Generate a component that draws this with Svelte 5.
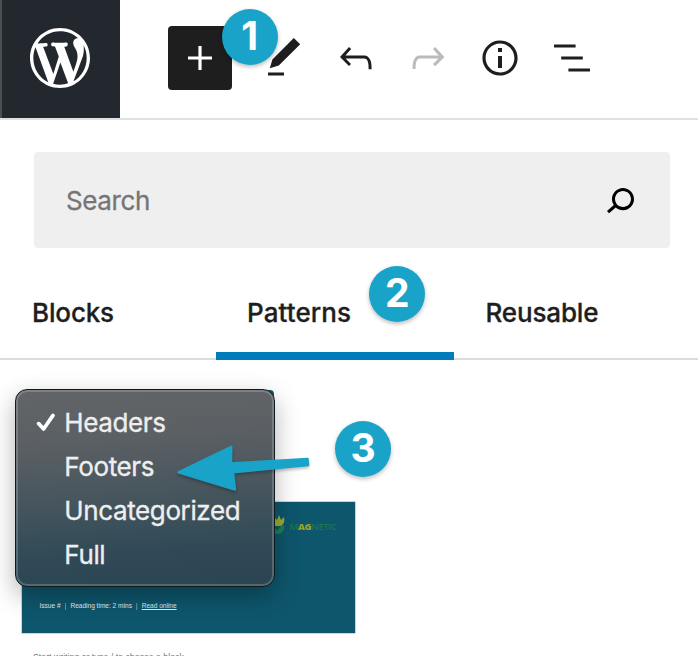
<script>
  const tools = [
    { name: 'Edit', d: 'M20.1 5.1L16.9 2 6.2 12.7l-1.3 4.4 4.5-1.3L20.1 5.1zM4 20.8h8v-1.5H4v1.5z' },
    { name: 'Undo', d: 'M18.3 11.7c-.6-.6-1.4-.9-2.3-.9H6.7l2.9-3.3-1.1-1-4.5 5L8.5 16l1-1-2.7-2.7H16c.5 0 .9.2 1.3.5 1 1 1 3.4 1 4.5v.3h1.5v-.2c0-1.5 0-4.3-1.5-5.7z' },
    { name: 'Redo', off: true, d: 'M15.6 6.5l-1.1 1 2.9 3.3H8c-.9 0-1.7.3-2.3.9-1.4 1.5-1.4 4.2-1.4 5.6v.2h1.5v-.3c0-1.1 0-3.5 1-4.5.3-.3.7-.5 1.3-.5h9.2L14.5 15l1.1 1.1 4.6-4.6-4.6-5z' },
    { name: 'Details', d: 'M12 3.2c-4.8 0-8.8 3.9-8.8 8.8 0 4.8 3.9 8.8 8.8 8.8 4.8 0 8.8-3.9 8.8-8.8 0-4.8-4-8.8-8.8-8.8zm0 16c-4 0-7.2-3.3-7.2-7.2C4.8 8 8 4.8 12 4.8s7.2 3.3 7.2 7.2c0 4-3.2 7.2-7.2 7.2zM11 17h2v-6h-2v6zm0-8h2V7h-2v2z' },
    { name: 'List view', d: 'M13.8 5.2H3v1.5h10.8V5.2zm-3.6 12v1.5H21v-1.5H10.2zm7.2-6H6.6v1.5h10.8v-1.5z' }
  ];
  const options = ['Headers', 'Footers', 'Uncategorized', 'Full'];
  let selected = $state('Headers');
</script>

<div class="page">
  <header>
    <div class="logo">
      <svg viewBox="-2 -2 24 24" width="72" height="72"><path fill="#fff" d="M20 10c0-5.51-4.49-10-10-10C4.48 0 0 4.49 0 10c0 5.52 4.48 10 10 10 5.51 0 10-4.48 10-10zM7.78 15.37L4.37 6.22c.55-.02 1.17-.08 1.17-.08.5-.06.44-1.13-.06-1.11 0 0-1.45.11-2.37.11-.18 0-.37 0-.58-.01C4.12 2.69 6.87 1.11 10 1.11c2.33 0 4.45.87 6.05 2.34-.68-.11-1.65.39-1.65 1.58 0 .74.45 1.36.9 2.1.35.61.55 1.36.55 2.46 0 1.49-1.4 5-1.4 5l-3.03-8.37c.54-.02.82-.17.82-.17.5-.05.44-1.25-.06-1.22 0 0-1.44.12-2.38.12-.87 0-2.33-.12-2.33-.12-.5-.03-.56 1.2-.06 1.22l.92.08 1.26 3.41zM17.41 10c.24-.64.74-1.87.43-4.25.7 1.29 1.05 2.71 1.05 4.25 0 3.29-1.73 6.24-4.4 7.78.97-2.59 1.94-5.2 2.92-7.78zM6.1 18.09C3.12 16.65 1.11 13.53 1.11 10c0-1.3.23-2.48.72-3.59C3.25 10.3 4.67 14.2 6.1 18.09zm4.03-6.63l2.58 6.98c-.86.29-1.76.45-2.71.45-.79 0-1.57-.11-2.29-.33.81-2.38 1.62-4.74 2.42-7.1z" /></svg>
    </div>
    <button class="add" aria-label="Add block">
      <svg viewBox="0 0 24 24" width="48" height="48"><path fill="#fff" d="M18 11.2h-5.2V6h-1.6v5.2H6v1.6h5.2V18h1.6v-5.2H18z" /></svg>
    </button>
    {#each tools as tool}
      <button class="tool" class:off={tool.off} aria-label={tool.name}>
        <svg viewBox="0 0 24 24" width="48" height="48"><path fill="currentColor" d={tool.d} /></svg>
      </button>
    {/each}
  </header>

  <div class="search">
    <span>Search</span>
    <svg viewBox="0 0 24 24" width="48" height="48"><path fill="#000" d="M13.5 6C10.5 6 8 8.5 8 11.5c0 1.1.3 2.1.9 3l-3.4 3 1 1.1 3.4-2.9c1 .9 2.2 1.4 3.6 1.4 3 0 5.5-2.5 5.5-5.5C19 8.5 16.5 6 13.5 6zm0 9.5c-2.2 0-4-1.8-4-4s1.8-4 4-4 4 1.8 4 4-1.8 4-4 4z" /></svg>
  </div>

  <nav>
    <div class="tab blocks"><span>Blocks</span></div>
    <div class="tab patterns"><span>Patterns</span></div>
    <div class="tab reusable"><span>Reusable</span></div>
  </nav>

  <main>
    <div class="preview">
      <div class="brand">
        <svg viewBox="0 0 22 24" width="22" height="24">
          <path fill="#9cad2f" d="M6 12C4 9 4 6 5 3l3 3 2-5 2 5 3-3c1 4 0 7-3 9z" />
          <path fill="#1d8050" d="M1 13c4-1 6 1 7 4 2-4 5-6 7-6 1 5-2 9-6 9-5 0-7-3-8-7z" />
        </svg>
        <span class="name">M<b>AG</b>NETIC</span>
      </div>
      <div class="meta">
        <span>Issue #</span><i>|</i><span class="time">Reading time: 2 mins</span><i>|</i><u>Read online</u>
      </div>
    </div>
    <p class="hint">Start writing or type / to choose a block</p>
  </main>

  <div class="corner"></div>
  <div class="menu">
    {#each options as option}
      <button class="option" onclick={() => (selected = option)}>
        <span class="tick">
          {#if option === selected}
            <svg viewBox="0 0 20 20" width="20" height="20"><path d="M2.6 11.6L7.6 17L17 3.4" fill="none" stroke="#fff" stroke-width="3.7" stroke-linecap="round" stroke-linejoin="round" /></svg>
          {/if}
        </span>
        <span class="label">{option}</span>
      </button>
    {/each}
  </div>

  <svg class="arrow" viewBox="170 440 145 60" width="145" height="60">
    <path d="M178.5 472.3L231.3 446.9L231 463.4L307.6 459L308.1 465L233 472.3L234.9 489.5Z" fill="#1aa3c8" stroke="#1aa3c8" stroke-width="2.4" stroke-linejoin="round" />
  </svg>
  <div class="badge one">1</div>
  <div class="badge two">2</div>
  <div class="badge three">3</div>
</div>

<style>
  :global(body) { margin: 0; background: #fff; overflow: hidden; }
  .page { position: relative; width: 698px; height: 656px; overflow: hidden; background: #fff; color: #1e1e1e; font-family: Inter, "Liberation Sans", sans-serif; font-size: 26px; }
  button { border: 0; margin: 0; padding: 0; background: none; font: inherit; color: inherit; }
  svg { display: block; flex: none; }
  header { display: flex; align-items: center; height: 118px; border-bottom: 2px solid #e0e0e0; }
  .logo { box-sizing: border-box; width: 120px; height: 118px; padding: 22px 24px 0 22px; background: #23282e; border-left: 2px solid #4b4f54; }
  .add { margin: 0 16px 2px 48px; width: 64px; height: 64px; border-radius: 4px; background: #1e1e1e; display: flex; align-items: center; justify-content: center; }
  .tool { width: 72px; height: 64px; margin-bottom: 2px; display: flex; align-items: center; justify-content: center; color: #1e1e1e; }
  .off { color: #bbb; }
  .search { display: flex; align-items: center; justify-content: space-between; box-sizing: border-box; margin: 32px 28px 0 34px; height: 96px; padding: 0 26px 0 32px; border-radius: 4px; background: #efefef; color: #757575; letter-spacing: -.4px; -webkit-text-stroke: .3px; }
  nav { display: flex; box-sizing: border-box; height: 96px; margin-top: 16px; box-shadow: inset 0 -2px #ddd; font-weight: 500; -webkit-text-stroke: .3px; margin-bottom: 142px; }
  .tab { box-sizing: border-box; padding-left: 32px; height: 96px; line-height: 98px; letter-spacing: -.15px; }
  .blocks { width: 216px; }
  .patterns { width: 238px; padding-left: 31px; letter-spacing: .1px; box-shadow: inset 0 -8px #007cba; }
  .reusable { padding-left: 31.5px; }
  main { padding-left: 22px; }
  .preview { box-sizing: border-box; width: 333px; height: 131px; background: #0e566c; box-shadow: 0 0 0 .5px #8eafba; display: flex; flex-direction: column; justify-content: space-between; padding: 12px 17px 22px 17.5px; }
  .brand { display: flex; align-items: center; margin-left: 229px; color: #1b774e; }
  .name { font: 600 9.5px "Open Sans", sans-serif; margin-left: -1px; letter-spacing: -.3px; }
  .name b { color: #8fa42d; }
  .meta { display: flex; font: 6.55px/10px "Liberation Sans", sans-serif; color: #e1eaed; white-space: nowrap; }
  .meta i { font-style: normal; width: 9.8px; text-align: center; opacity: .7; }
  .hint { margin: 19px 0 0 11px; font: 8.75px/10px "Liberation Sans", sans-serif; color: #777; white-space: nowrap; }
  .corner { position: absolute; left: 266px; top: 390px; width: 8px; height: 10px; border-radius: 0 4px 0 0; background: #0e566c; }
  .menu { position: absolute; left: 15px; top: 389px; box-sizing: border-box; width: 260px; height: 198px; padding: 9px 0 0 16px; border: 1px solid #111a1d; border-radius: 12px; background: linear-gradient(176deg, #626467 0%, #5b6064 25%, #48565e 52%, #304b57 78%, #2a4551 100%); box-shadow: inset 0 0 0 2px #ffffff30, 0 9px 25px #0000004d; color: #eee; }
  .option { display: flex; align-items: center; height: 44px; width: 230px; text-align: left; }
  .tick { width: 32.3px; padding: 2px 0 0 3.5px; box-sizing: border-box; }
  .label { padding-top: 4px; line-height: 32px; letter-spacing: -.38px; -webkit-text-stroke: .35px; }
  .arrow { position: absolute; left: 170px; top: 440px; filter: drop-shadow(0 2px 1.5px #0004); }
  .badge { position: absolute; width: 56px; height: 56px; border-radius: 50%; background: #1aa3c8; color: #fff; text-align: center; font-size: 39px; line-height: 54px; font-weight: 700; box-shadow: 0 2px 4px #00000045; }
  .one { left: 221.6px; top: 9px; }
  .two { left: 369.2px; top: 266px; }
  .three { left: 335.2px; top: 421px; }
</style>
